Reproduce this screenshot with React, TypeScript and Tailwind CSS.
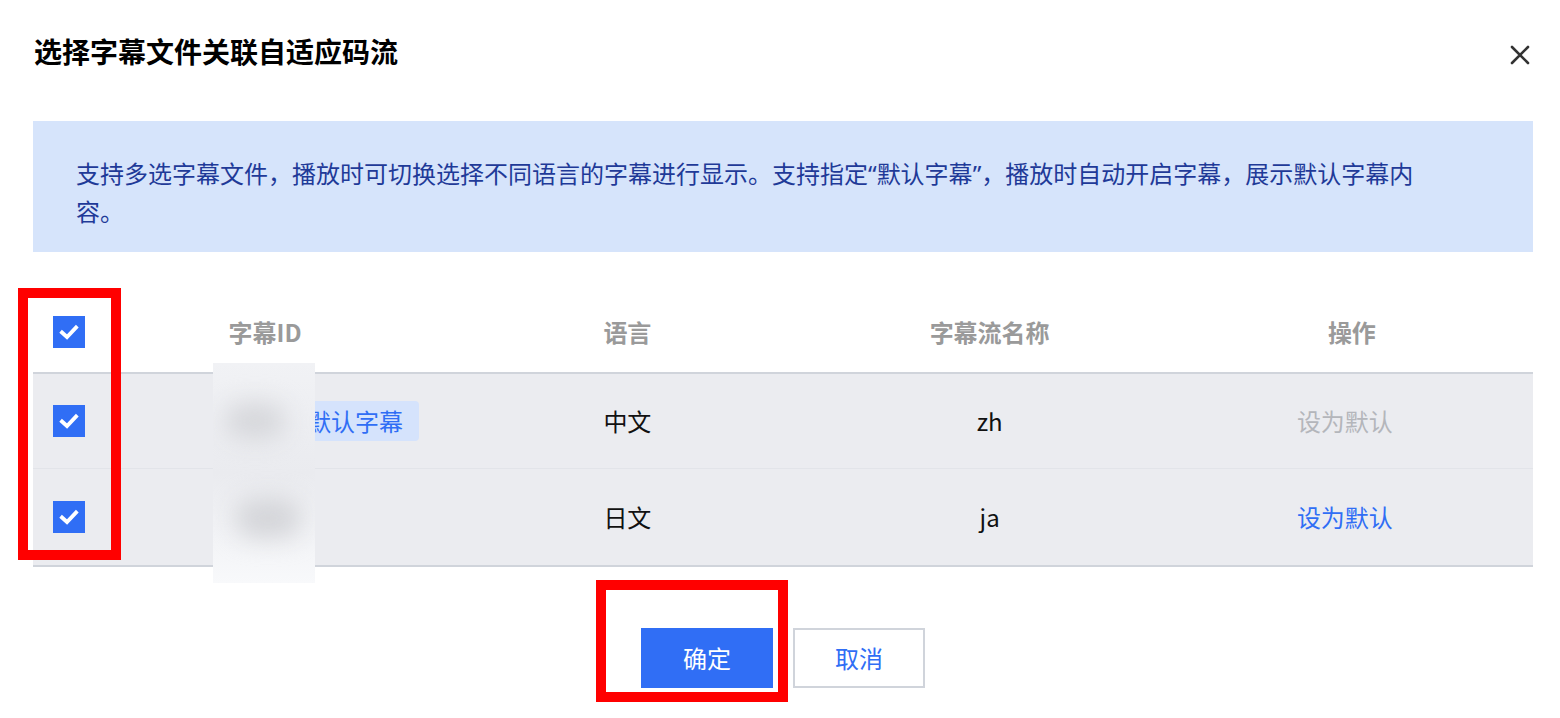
import React from "react";

const font = { fontFamily: '"Noto Sans CJK SC", "Noto Sans", sans-serif' };
const latin = { fontFamily: '"Noto Sans", sans-serif' };

function Check() {
  return (
    <div className="w-8 h-8 bg-[#306ef5] flex items-center justify-center">
      <svg width="24" height="24" viewBox="0 0 24 24">
        <path d="M5 12.5 L10 17 L19 7.5" fill="none" stroke="#fff" strokeWidth="3.8" strokeLinecap="square" />
      </svg>
    </div>
  );
}

export default function App() {
  return (
    <div className="w-[1560px] h-[718px] bg-white relative overflow-hidden" style={font}>
      <div className="flex items-center justify-between h-[102px] pl-[34px] pr-[30px]">
        <div className="text-[28px] font-bold text-black">选择字幕文件关联自适应码流</div>
        <svg width="20" height="20" viewBox="0 0 20 20" className="mt-2">
          <path d="M2 2 L18 18 M18 2 L2 18" stroke="#333" strokeWidth="2.6" strokeLinecap="round" />
        </svg>
      </div>

      <div className="ml-[33px] mr-[27px] mt-[19px] h-[131px] bg-[#d6e4fb] pl-[43px] pt-[33px]">
        <p className="w-[1350px] text-[24px] leading-[37px] text-[#1f3a98]">
          支持多选字幕文件，播放时可切换选择不同语言的字幕进行显示。支持指定<span style={latin}>“</span>默认字幕<span style={latin}>”</span>，播放时自动开启字幕，展示默认字幕内容。
        </p>
      </div>

      <div className="ml-[33px] mr-[27px] mt-[40px]">
        <div className="grid grid-cols-[51px_repeat(4,1fr)] h-[82px] border-b-2 border-[#d0d4db] items-center text-[24px] font-semibold text-[#9a9a9a]">
          <div className="pl-5"><Check /></div>
          <div className="text-center">字幕ID</div>
          <div className="text-center">语言</div>
          <div className="text-center">字幕流名称</div>
          <div className="text-center">操作</div>
        </div>
        <div className="grid grid-cols-[51px_repeat(4,1fr)] h-[95px] bg-[#ebecf0] border-b border-[#e2e4e9] items-center text-[24px] text-[#111]">
          <div className="pl-5"><Check /></div>
          <div className="flex items-center pl-[207px]">
            <span className="h-10 px-[16px] flex items-center rounded bg-[#d5e3fc] text-[#306ef5] whitespace-nowrap">默认字幕</span>
          </div>
          <div className="text-center">中文</div>
          <div className="text-center">zh</div>
          <div className="text-center pr-[14px] text-[#b4b6bb]">设为默认</div>
        </div>
        <div className="grid grid-cols-[51px_repeat(4,1fr)] h-[98px] bg-[#ebecf0] border-b-2 border-[#d0d4db] items-center text-[24px] text-[#111]">
          <div className="pl-5"><Check /></div>
          <div />
          <div className="text-center">日文</div>
          <div className="text-center">ja</div>
          <div className="text-center pr-[14px] text-[#306ef5]">设为默认</div>
        </div>
      </div>

      <div className="flex justify-center gap-5 mt-[61px] pl-[6px]">
        <button className="w-[132px] h-[60px] bg-[#306ef5] text-white text-[24px]">确定</button>
        <button className="w-[132px] h-[60px] bg-white border-2 border-[#d0d4db] text-[#306ef5] text-[24px]">取消</button>
      </div>

      {/* redaction blur overlay */}
      <div className="absolute left-[213px] top-[363px] w-[102px] h-[220px] overflow-hidden bg-gradient-to-b from-[#f1f2f5] via-[#eaebef] to-[#f8f9fb]">
        <div className="absolute left-[12px] top-[40px] w-[60px] h-[36px] rounded-full bg-[#d6d7db] blur-[12px]" />
        <div className="absolute left-[22px] top-[135px] w-[66px] h-[40px] rounded-full bg-[#d4d5d9] blur-[12px]" />
      </div>

      {/* red annotation boxes */}
      <div className="absolute left-[18px] top-[288px] w-[103px] h-[272px] border-[10px] border-[#ff0000]" />
      <div className="absolute left-[596px] top-[580px] w-[192px] h-[122px] border-[10px] border-[#ff0000]" />
    </div>
  );
}
